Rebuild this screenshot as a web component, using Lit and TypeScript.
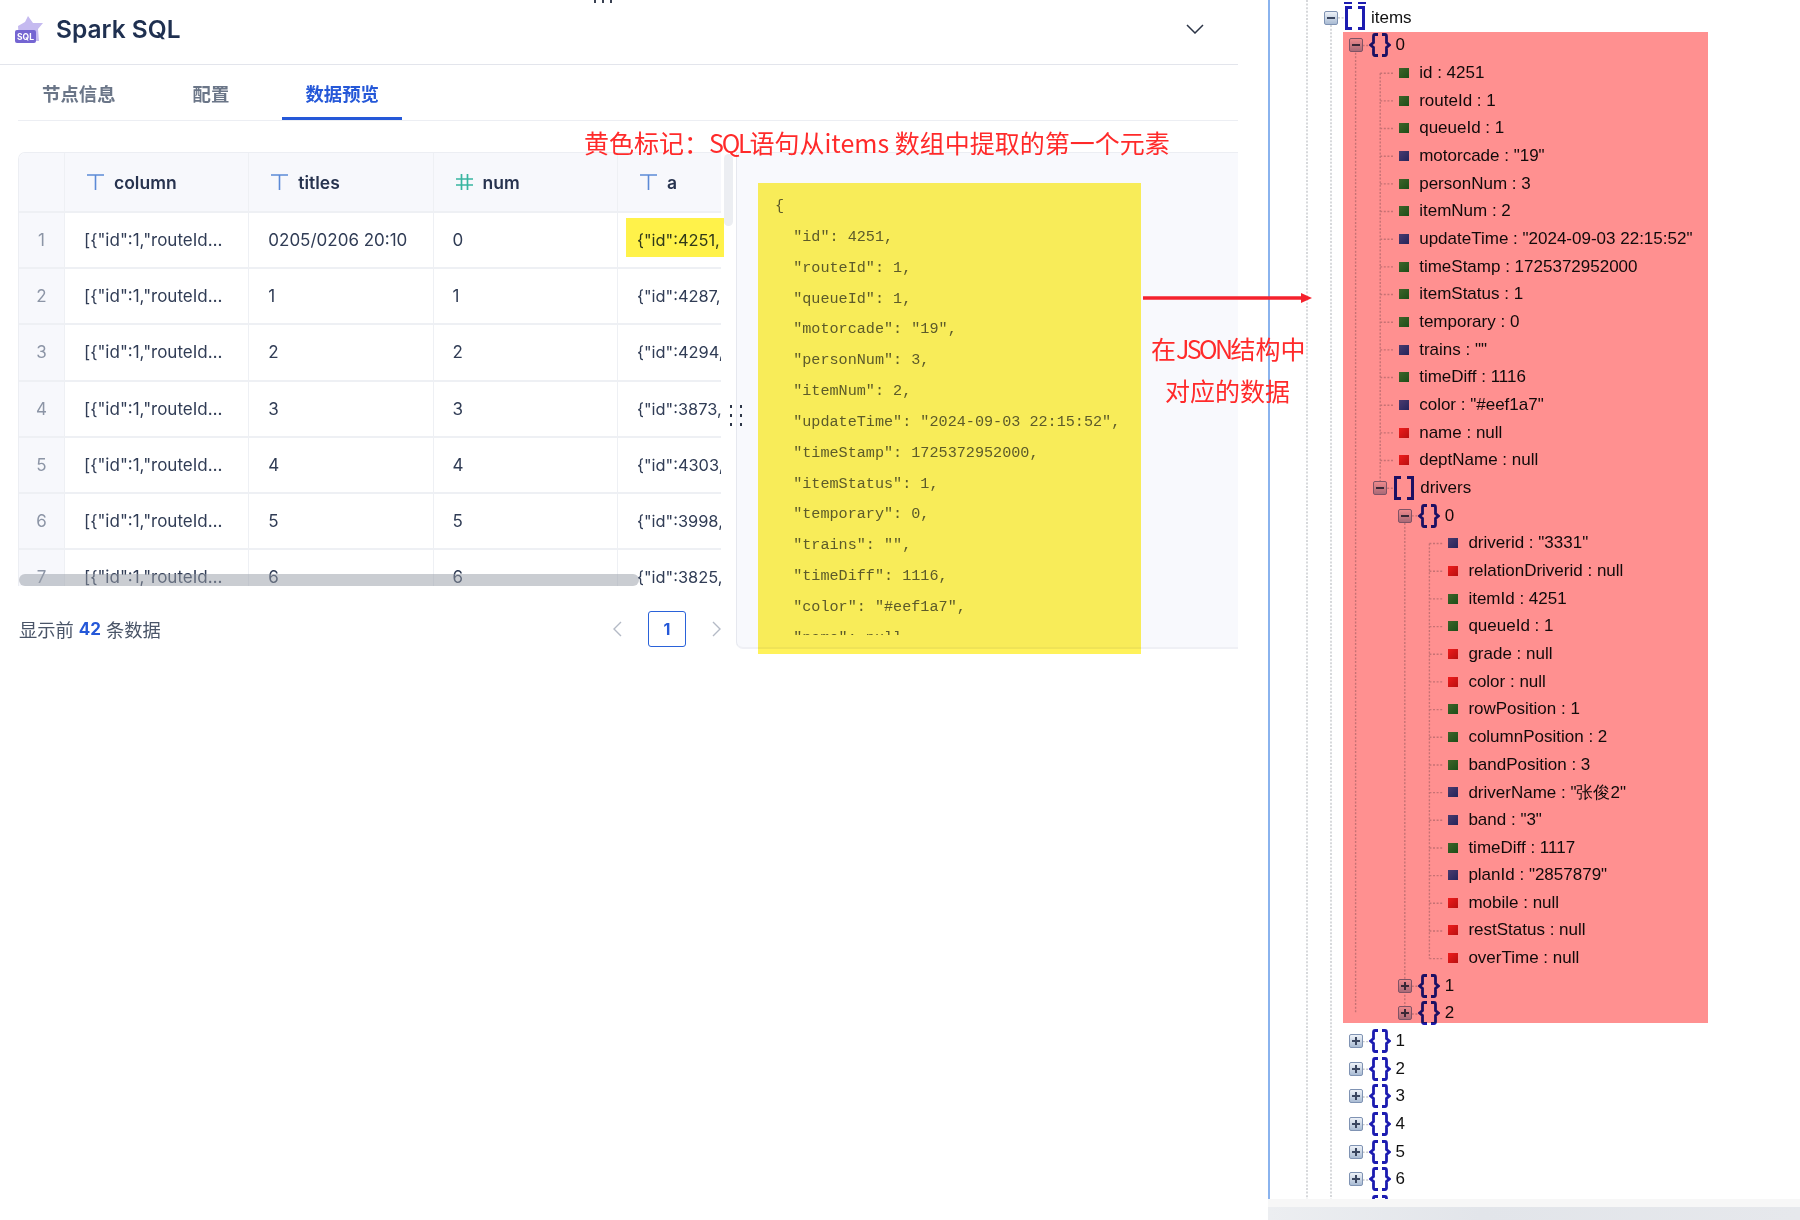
import { LitElement, html, css, svg } from "lit";
import { customElement } from "lit/decorators.js";

type Row =
  | { k: "node"; l: number; t: "arr" | "obj"; open: boolean; label: string }
  | { k: "leaf"; l: number; c: "n" | "s" | "x"; label: string };

const STEP = 24.6;
const P = 27.67;

const leaf = (l: number, c: "n" | "s" | "x", label: string): Row => ({ k: "leaf", l, c, label });
const node = (l: number, t: "arr" | "obj", open: boolean, label: string): Row => ({ k: "node", l, t, open, label });

const ROWS: Row[] = [
  node(0, "arr", true, "items"),
  node(1, "obj", true, "0"),
  leaf(2, "n", "id : 4251"),
  leaf(2, "n", "routeId : 1"),
  leaf(2, "n", "queueId : 1"),
  leaf(2, "s", 'motorcade : "19"'),
  leaf(2, "n", "personNum : 3"),
  leaf(2, "n", "itemNum : 2"),
  leaf(2, "s", 'updateTime : "2024-09-03 22:15:52"'),
  leaf(2, "n", "timeStamp : 1725372952000"),
  leaf(2, "n", "itemStatus : 1"),
  leaf(2, "n", "temporary : 0"),
  leaf(2, "s", 'trains : ""'),
  leaf(2, "n", "timeDiff : 1116"),
  leaf(2, "s", 'color : "#eef1a7"'),
  leaf(2, "x", "name : null"),
  leaf(2, "x", "deptName : null"),
  node(2, "arr", true, "drivers"),
  node(3, "obj", true, "0"),
  leaf(4, "s", 'driverid : "3331"'),
  leaf(4, "x", "relationDriverid : null"),
  leaf(4, "n", "itemId : 4251"),
  leaf(4, "n", "queueId : 1"),
  leaf(4, "x", "grade : null"),
  leaf(4, "x", "color : null"),
  leaf(4, "n", "rowPosition : 1"),
  leaf(4, "n", "columnPosition : 2"),
  leaf(4, "n", "bandPosition : 3"),
  leaf(4, "s", 'driverName : "张俊2"'),
  leaf(4, "s", 'band : "3"'),
  leaf(4, "n", "timeDiff : 1117"),
  leaf(4, "s", 'planId : "2857879"'),
  leaf(4, "x", "mobile : null"),
  leaf(4, "x", "restStatus : null"),
  leaf(4, "x", "overTime : null"),
  node(3, "obj", false, "1"),
  node(3, "obj", false, "2"),
  node(1, "obj", false, "1"),
  node(1, "obj", false, "2"),
  node(1, "obj", false, "3"),
  node(1, "obj", false, "4"),
  node(1, "obj", false, "5"),
  node(1, "obj", false, "6"),
  node(1, "obj", false, "7"),
];

const TABLE = [
  ["1", "0205/0206 20:10", "0", "4251"],
  ["2", "1", "1", "4287"],
  ["3", "2", "2", "4294"],
  ["4", "3", "3", "3873"],
  ["5", "4", "4", "4303"],
  ["6", "5", "5", "3998"],
  ["7", "6", "6", "3825"],
];

const JSON_TEXT = `{
  "id": 4251,
  "routeId": 1,
  "queueId": 1,
  "motorcade": "19",
  "personNum": 3,
  "itemNum": 2,
  "updateTime": "2024-09-03 22:15:52",
  "timeStamp": 1725372952000,
  "itemStatus": 1,
  "temporary": 0,
  "trains": "",
  "timeDiff": 1116,
  "color": "#eef1a7",
  "name": null,`;

const tIcon = html`<svg class="ti" viewBox="0 0 17 16" width="17" height="16"><path d="M0 1H17M8.5 1V16" fill="none" stroke="#5c8ad6" stroke-width="1.6"/></svg>`;
const hashIcon = html`<svg class="ti" viewBox="0 0 17 16" width="17" height="16"><path d="M5.5 0V16M11.5 0V16M0 5H17M0 11H17" fill="none" stroke="#38b5a0" stroke-width="1.7"/></svg>`;

const arrIcon = svg`<path d="M8 1.5H2.5V22.5H8M14 1.5H19.5V22.5H14" fill="none" stroke="#1c1cb0" stroke-width="3"/>`;
const objIcon = svg`<path d="M9 1.5H6Q4.5 1.5 4.5 3.5V9.5L1.5 12L4.5 14.5V20.5Q4.5 22.5 6 22.5H9M13 1.5H16Q17.5 1.5 17.5 3.5V9.5L20.5 12L17.5 14.5V20.5Q17.5 22.5 16 22.5H13" fill="none" stroke="#1c1cb0" stroke-width="2.8"/>`;

@customElement("app-root")
export class AppRoot extends LitElement {
  static styles = css`
    :host {
      display: block;
      position: relative;
      width: 1800px;
      height: 1220px;
      overflow: hidden;
      background: #fff;
      font-family: Inter, "Noto Sans CJK SC", sans-serif;
    }
    .page { display: flex; height: 100%; }
    .left { width: 1238px; flex: none; }
    .head {
      height: 65px;
      box-sizing: border-box;
      border-bottom: 1px solid #e3e5ec;
      display: flex;
      align-items: center;
      padding: 0 34px 6px 15px;
      gap: 13px;
    }
    .title { font-size: 24.5px; font-weight: 600; color: #1f3050; flex: 1; }
    .tabs {
      margin: 0 0 31px 18px;
      height: 56px;
      box-sizing: border-box;
      border-bottom: 1px solid #eceef3;
      display: flex;
      font: 600 18.4px "Noto Sans CJK SC", sans-serif;
      color: #6b7688;
    }
    .tab {
      padding: 0 23px;
      height: 55px;
      box-sizing: border-box;
      display: flex;
      align-items: center;
      margin-right: 30px;
      border-bottom: 3px solid transparent;
      padding-top: 3px;
    }
    .tab:last-child { margin-right: 0; }
    .tab.on { color: #2558d8; border-bottom-color: #2558d8; }
    .tab:first-child { margin-left: 1px; margin-right: 31px; }
    .tab:nth-child(2) { margin-right: 30px; }
    .body { display: flex; margin-left: 18px; align-items: flex-start; position: relative; }
    .col { width: 703px; flex: none; }
    .table {
      position: relative;
      height: 434px;
      overflow: hidden;
      box-sizing: border-box;
      border-top: 1px solid #eceef3;
      border-left: 1px solid #eceef3;
      border-top-left-radius: 7px;
      display: grid;
      grid-template-columns: 46px 184.3px 184.3px 184.3px 1fr;
      grid-template-rows: 60px;
      grid-auto-rows: 56.2px;
      font-size: 17px;
      color: #303c55;
    }
    .c {
      box-sizing: border-box;
      border-right: 1px solid #eef0f4;
      border-bottom: 2px solid #eef0f4;
      display: flex;
      align-items: center;
      padding: 0 19px;
      white-space: nowrap;
      overflow: hidden;
    }
    .c:nth-child(5n) { border-right: none; padding-right: 0; font-size: 16.4px; }
    .idx { justify-content: center; padding: 0; background: #f7f8fc; color: #8c95a6; }
    .th {
      background: #f7f8fc;
      font-weight: 600;
      font-size: 17.5px;
      color: #27334f;
      gap: 10px;
      padding-left: 22px;
    }
    .c.th:nth-child(5n) { font-size: 17.5px; }
    .ti { flex: none; }
    .hbar {
      position: absolute;
      left: 0;
      bottom: 0;
      width: 620px;
      height: 12px;
      border-radius: 6px;
      background: rgba(150, 155, 165, 0.5);
    }
    .cellmark {
      position: absolute;
      left: 608px;
      top: 66px;
      width: 98px;
      height: 39px;
      background: #fff24a;
      mix-blend-mode: multiply;
    }
    .foot {
      margin-top: 25px;
      height: 36px;
      display: flex;
      align-items: center;
      font: 18.3px "Noto Sans CJK SC", sans-serif;
      color: #4a5568;
      padding-left: 1px;
    }
    .foot b { font-family: Inter, sans-serif; color: #2558d8; font-weight: 700; margin: 0 5px; font-size: 17px; }
    .foot .sp { flex: 1; }
    .pg { display: flex; align-items: center; margin-right: -1px; }
    .page-btn {
      width: 38px;
      height: 36px;
      box-sizing: border-box;
      border: 1px solid #2a62d9;
      border-radius: 3px;
      display: flex;
      align-items: center;
      justify-content: center;
      font: 700 16px Inter, sans-serif;
      color: #2558d8;
      margin: 0 26px;
    }
    .gutter { width: 15px; flex: none; position: relative; height: 497px; }
    .thumb {
      position: absolute;
      left: 3px;
      top: 2px;
      width: 9px;
      height: 72px;
      border-radius: 5px;
      background: #eceef2;
    }
    .grip {
      position: absolute;
      left: 9px;
      top: 253px;
      display: grid;
      grid-template-columns: 2px 2px;
      column-gap: 8px;
      row-gap: 6px;
      z-index: 3;
    }
    .grip i { width: 2px; height: 3px; background: #2d3648; }
    .pane {
      width: 502px;
      height: 497px;
      box-sizing: border-box;
      flex: none;
      background: #f8f9fd;
      border-top: 1px solid #eceef3;
      border-left: 1px solid #e6e8ef;
      border-bottom: 2px solid #eff0f5;
      border-bottom-left-radius: 7px;
      padding-top: 38px;
      padding-left: 38px;
    }
    .clip { height: 444px; overflow: hidden; }
    pre {
      margin: 0;
      font: 15.15px/30.85px "Liberation Mono", monospace;
      color: #5d6074;
    }
    .mark {
      position: absolute;
      left: 740px;
      top: 31px;
      width: 383px;
      height: 471px;
      background: #fff25a;
      mix-blend-mode: multiply;
    }
    .tree {
      flex: 1;
      margin-left: 30px;
      height: 1199px;
      box-sizing: border-box;
      border-left: 2px solid #8ab3ee;
      padding-top: 4px;
      position: relative;
      overflow: hidden;
      font: 17px "Liberation Sans", sans-serif;
      color: #111;
    }
    .guides { position: absolute; left: 0; top: 0; width: 530px; height: 1199px; }
    .row { height: 27.67px; display: flex; align-items: center; white-space: nowrap; position: relative; }
    .box {
      width: 14px;
      height: 14px;
      box-sizing: border-box;
      border: 1px solid #7f93b3;
      border-radius: 2px;
      background: linear-gradient(#eef2f8, #a9bbd3);
      margin-right: 6px;
      position: relative;
      flex: none;
    }
    .box::before { content: ""; position: absolute; left: 2px; right: 2px; top: 5px; height: 2px; background: #3a4660; }
    .box.plus::after { content: ""; position: absolute; top: 2px; bottom: 2px; left: 5px; width: 2px; background: #3a4660; }
    .ic { width: 22px; height: 24px; margin-right: 5px; flex: none; }
    .sq { width: 10px; height: 10px; margin-right: 10px; flex: none; }
    .sq.n { background: linear-gradient(135deg, #3fb14a, #1c8a2a); }
    .sq.s { background: linear-gradient(135deg, #4a68c4, #2440a0); }
    .sq.x { background: linear-gradient(135deg, #f03030, #b81c1c); }
    .dash { position: absolute; top: -2px; left: 74px; display: flex; gap: 6px; }
    .dash i { width: 8px; height: 2px; background: #1c1cb0; }
    .red {
      position: absolute;
      left: 73px;
      top: 32px;
      width: 365px;
      height: 991px;
      background: #ff9090;
      mix-blend-mode: multiply;
    }
    .bot { position: absolute; left: 1268px; right: 0; top: 1199px; height: 21px; background: #f7f7f7; }
    .bot div { margin-top: 8px; height: 13px; background: linear-gradient(90deg, #eceef1, #e2e5ea 40%, #e6e8ec); }
    .note { position: absolute; font: 25px/42px "Noto Sans CJK SC", sans-serif; color: #ff2a2a; white-space: nowrap; }
    .n1 { left: 584px; top: 121px; }
    .n2 { left: 1151px; top: 327px; width: 153px; text-align: center; }
    .tight { letter-spacing: -2.6px; }
    .tight2 { letter-spacing: -2.2px; }
    .arrow { position: absolute; left: 1143px; top: 291px; }
    .topdots { position: absolute; left: 594px; top: 0; display: flex; gap: 6px; }
    .topdots i { width: 2px; height: 3px; background: #3a4152; }
  `;

  private guides() {
    const x = (l: number) => 61 + STEP * l;
    const y = (i: number) => 4 + P * i + P / 2;
    const lines: string[] = [];
    lines.push(`M37 0V1199`);
    lines.push(`M${x(0)} ${y(0)}V1199`);
    lines.push(`M${x(1)} ${y(1)}V${y(36)}`);
    lines.push(`M${x(2)} ${y(2)}V${y(17)}`);
    lines.push(`M${x(3)} ${y(18)}V${y(36)}`);
    lines.push(`M${x(4)} ${y(19)}V${y(34)}`);
    ROWS.forEach((r, i) => {
      if (r.k === "leaf") lines.push(`M${x(r.l)} ${y(i)}h13`);
      else lines.push(`M${x(r.l) + 7} ${y(i)}h6`);
    });
    return svg`<svg class="guides" viewBox="0 0 530 1199"><path d="${lines.join("")}" fill="none" stroke="#c6c8cc" stroke-width="1.4" stroke-dasharray="2 1.6"/></svg>`;
  }

  private renderRow(r: Row, i: number) {
    if (r.k === "leaf") {
      return html`<div class="row" style="padding-left:${80 + STEP * r.l}px">
        <span class="sq ${r.c}"></span><span>${r.label}</span>
      </div>`;
    }
    return html`<div class="row" style="padding-left:${54 + STEP * r.l}px">
      <span class="box ${r.open ? "" : "plus"}"></span>
      <svg class="ic" viewBox="0 0 22 24">${r.t === "arr" ? arrIcon : objIcon}</svg>
      <span>${r.label}</span>
      ${i === 0 ? html`<span class="dash"><i></i><i></i></span>` : ""}
    </div>`;
  }

  render() {
    return html`
      <div class="page">
        <section class="left">
          <header class="head">
            <svg width="28" height="28" viewBox="0 0 28 28">
              <path d="M13 1L18 8L28 8L23 14L24 26H4L3 11L10 7Z" fill="#c5baf0"/>
              <rect x="0" y="15" width="21" height="13" rx="2" fill="#7465d2"/>
              <text x="10.5" y="24.8" text-anchor="middle" font-family="Inter, sans-serif" font-size="8.5" font-weight="700" fill="#fff">SQL</text>
            </svg>
            <span class="title">Spark SQL</span>
            <svg width="18" height="10" viewBox="0 0 18 10"><path d="M1 1L9 9L17 1" fill="none" stroke="#2b3446" stroke-width="1.5"/></svg>
          </header>
          <nav class="tabs">
            <div class="tab">节点信息</div>
            <div class="tab">配置</div>
            <div class="tab on">数据预览</div>
          </nav>
          <div class="body">
            <div class="col">
              <div class="table">
                <div class="c th"></div>
                <div class="c th">${tIcon}<span>column</span></div>
                <div class="c th">${tIcon}<span>titles</span></div>
                <div class="c th">${hashIcon}<span>num</span></div>
                <div class="c th">${tIcon}<span>a</span></div>
                ${TABLE.map(
                  ([n, t, m, id]) => html`
                    <div class="c idx">${n}</div>
                    <div class="c">[{"id":1,"routeId…</div>
                    <div class="c">${t}</div>
                    <div class="c">${m}</div>
                    <div class="c">{"id":${id},</div>
                  `
                )}
                <div class="hbar"></div>
              </div>
              <div class="foot">
                <span>显示前</span><b>42</b><span>条数据</span>
                <span class="sp"></span>
                <div class="pg">
                  <svg width="10" height="16" viewBox="0 0 10 16"><path d="M9 1L2 8L9 15" fill="none" stroke="#b4bac6" stroke-width="1.4"/></svg>
                  <div class="page-btn">1</div>
                  <svg width="10" height="16" viewBox="0 0 10 16"><path d="M1 1L8 8L1 15" fill="none" stroke="#b4bac6" stroke-width="1.4"/></svg>
                </div>
              </div>
            </div>
            <div class="gutter">
              <div class="thumb"></div>
              <div class="grip"><i></i><i></i><i></i><i></i><i></i><i></i></div>
            </div>
            <div class="pane">
              <div class="clip"><pre>${JSON_TEXT}</pre></div>
            </div>
            <div class="cellmark"></div>
            <div class="mark"></div>
          </div>
        </section>
        <section class="tree">
          ${this.guides()}
          ${ROWS.map((r, i) => this.renderRow(r, i))}
          <div class="red"></div>
        </section>
      </div>
      <div class="bot"><div></div></div>
      <div class="topdots"><i></i><i></i><i></i></div>
      <div class="note n1">黄色标记：<span class="tight2">SQL</span>语句从items 数组中提取的第一个元素</div>
      <div class="note n2">在<span class="tight">JSON</span>结构中<br />对应的数据</div>
      <svg class="arrow" width="170" height="14" viewBox="0 0 170 14">
        <path d="M0 7H160" stroke="#f5222d" stroke-width="3.5"/>
        <path d="M158 2L169 7L158 12Z" fill="#f5222d"/>
      </svg>
    `;
  }
}
